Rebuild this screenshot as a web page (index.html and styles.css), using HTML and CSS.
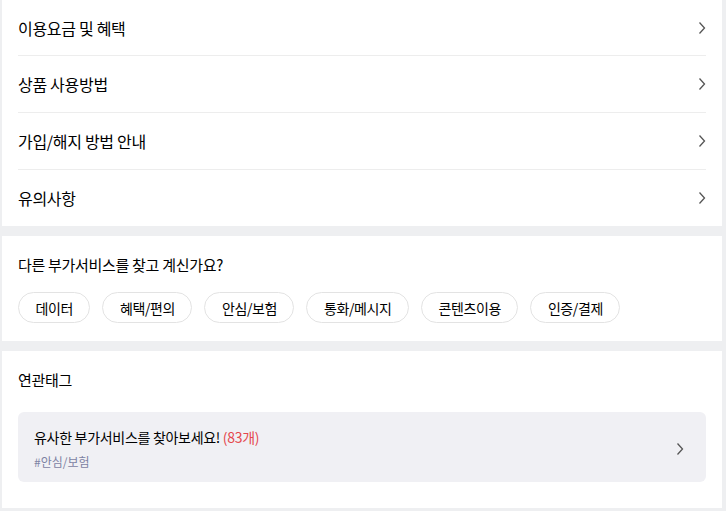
FILE: index.html
```html
<!DOCTYPE html>
<html>
  <head>
    <title>부가서비스 안내</title>
    <meta charset="UTF-8">
    <meta name="viewport" content="width=device-width, initial-scale=1.0">
    <link rel="stylesheet" href="styles.css">
  </head>

  <body>

    <div class="card menu">
      <a class="menu-row" href="#">
        <span>이용요금 및 혜택</span>
        <svg class="chev" width="8" height="14" viewBox="0 0 8 14"><polyline points="1.5,1.5 6.5,7 1.5,12.5"/></svg>
      </a>
      <a class="menu-row" href="#">
        <span>상품 사용방법</span>
        <svg class="chev" width="8" height="14" viewBox="0 0 8 14"><polyline points="1.5,1.5 6.5,7 1.5,12.5"/></svg>
      </a>
      <a class="menu-row" href="#">
        <span>가입/해지 방법 안내</span>
        <svg class="chev" width="8" height="14" viewBox="0 0 8 14"><polyline points="1.5,1.5 6.5,7 1.5,12.5"/></svg>
      </a>
      <a class="menu-row" href="#">
        <span>유의사항</span>
        <svg class="chev" width="8" height="14" viewBox="0 0 8 14"><polyline points="1.5,1.5 6.5,7 1.5,12.5"/></svg>
      </a>
    </div>

    <div class="card section">
      <h3 class="section-title">다른 부가서비스를 찾고 계신가요?</h3>
      <div class="chips">
        <a class="chip" href="#">데이터</a>
        <a class="chip" href="#">혜택/편의</a>
        <a class="chip" href="#">안심/보험</a>
        <a class="chip" href="#">통화/메시지</a>
        <a class="chip" href="#">콘텐츠이용</a>
        <a class="chip" href="#">인증/결제</a>
      </div>
    </div>

    <div class="card section tags">
      <h3 class="section-title">연관태그</h3>
      <a class="tag-box" href="#">
        <div>
          <p class="tag-text">유사한 부가서비스를 찾아보세요! <span class="count">(83개)</span></p>
          <p class="tag-name">#안심/보험</p>
        </div>
        <svg class="chev" width="8" height="14" viewBox="0 0 8 14"><polyline points="1.5,1.5 6.5,7 1.5,12.5"/></svg>
      </a>
    </div>

  </body>
</html>
```

FILE: styles.css
```css
body {
  margin: 0;
  padding: 0 4px 4px 2px;
  background-color: #eeeff1;
  font-family: "Noto Sans CJK KR", "Noto Sans", sans-serif;
  color: #000;
}

a {
  color: inherit;
  text-decoration: none;
}

.card {
  background-color: #fff;
  margin-bottom: 10px;
}

.menu {
  padding: 0 16px;
}

.menu-row {
  display: flex;
  align-items: center;
  justify-content: space-between;
  height: 56px;
  border-bottom: 1px solid #ededed;
  font-size: 16px;
  letter-spacing: -0.3px;
}

.menu-row:first-child {
  height: 55px;
}

.menu-row:last-child {
  border-bottom: none;
}

.chev polyline {
  fill: none;
  stroke: #555;
  stroke-width: 1.3;
}

.section {
  padding: 18px 16px 18px;
}

.section-title {
  margin: 0;
  font-size: 15px;
  font-weight: 400;
  line-height: 22px;
  letter-spacing: -0.3px;
}

.chips {
  display: flex;
  gap: 12px;
  margin-top: 16px;
}

.chip {
  display: inline-flex;
  align-items: center;
  height: 31px;
  box-sizing: border-box;
  padding: 0 16.5px;
  border: 1px solid #e3e3e3;
  border-radius: 16px;
  font-size: 14px;
  letter-spacing: -0.4px;
}

.tags {
  padding-bottom: 26px;
}

.tag-box {
  display: flex;
  align-items: center;
  justify-content: space-between;
  margin-top: 21px;
  height: 70px;
  box-sizing: border-box;
  padding: 15px 22px 11px 16px;
  background-color: #f0f0f4;
  border-radius: 6px;
}

.tag-text {
  margin: 0;
  font-size: 14px;
  line-height: 20px;
  letter-spacing: -0.3px;
}

.count {
  color: #e5484d;
}

.tag-name {
  margin: 6px 0 0;
  font-size: 12px;
  line-height: 18px;
  color: #7d82a3;
}
```
